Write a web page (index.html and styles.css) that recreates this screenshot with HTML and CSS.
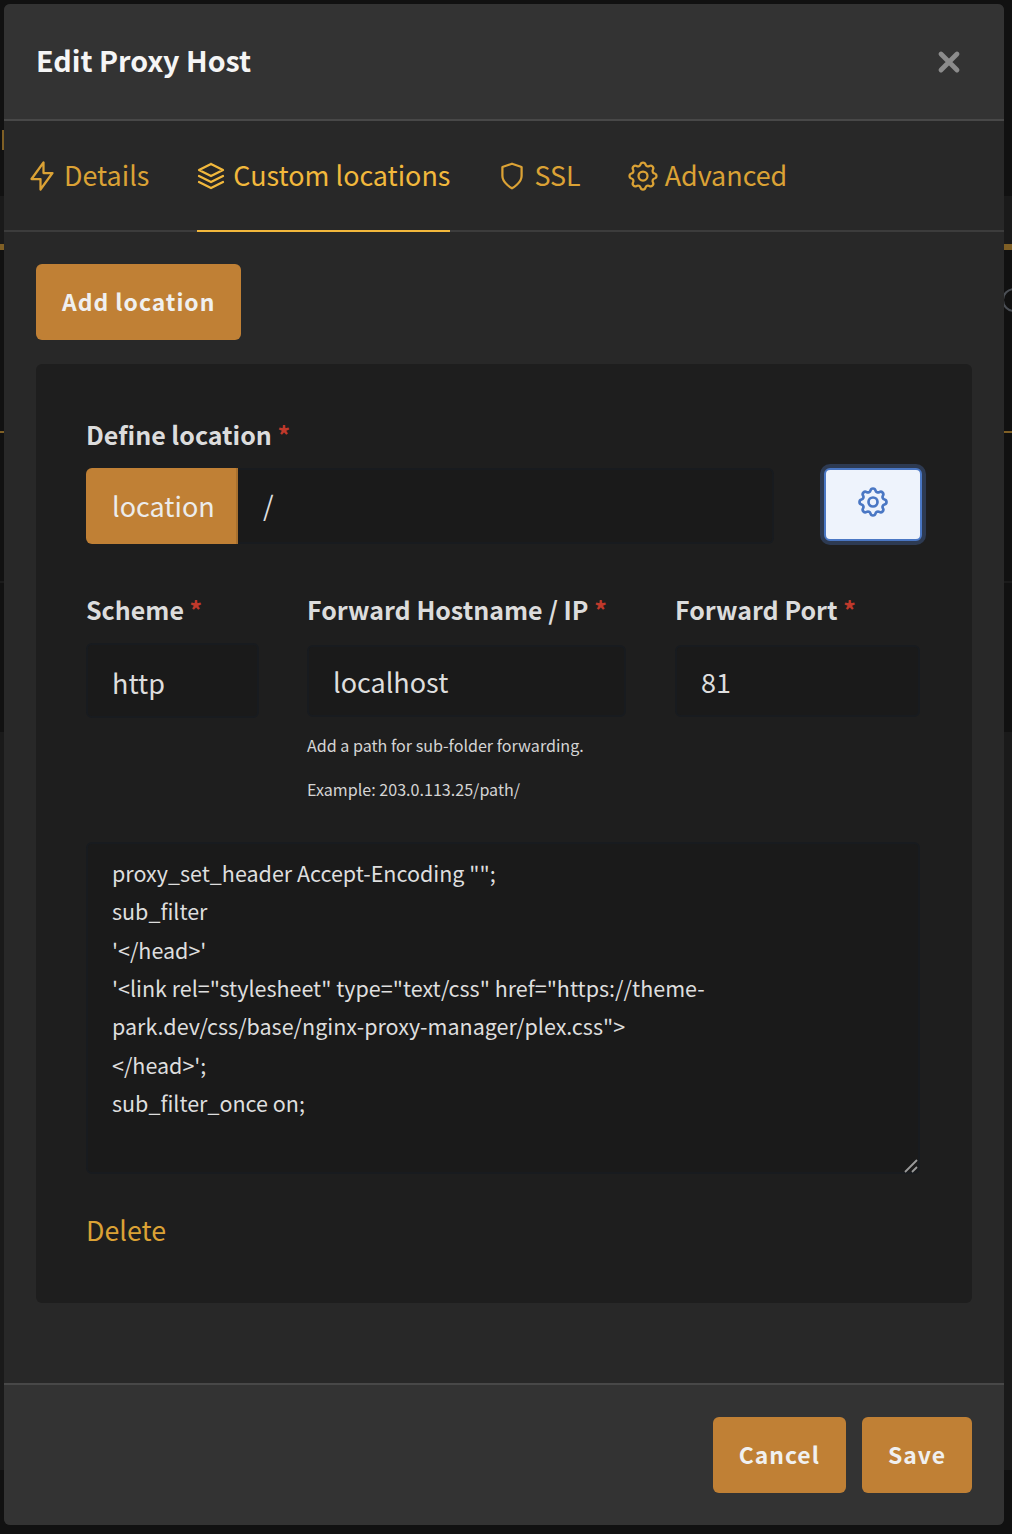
FILE: index.html
```html
<!DOCTYPE html>
<html lang="en">
<head>
<meta charset="utf-8">
<title>Edit Proxy Host</title>
<link rel="stylesheet" href="styles.css">
</head>
<body>
<div class="backdrop-bits">
  <span class="bit band-a"></span>
  <span class="bit band-b"></span>
  <span class="bit band-c"></span>
  <span class="bit bit-a"></span>
  <span class="bit bit-b"></span>
  <span class="bit bit-d"></span>
  <span class="bit bit-f"></span>
</div>
<main class="modal">
  <header class="modal-header">
    <h1 class="modal-title">Edit Proxy Host</h1>
    <svg class="close" viewBox="0 0 24 24" aria-label="Close"><path d="M4 4 20 20M20 4 4 20"/></svg>
  </header>
  <nav class="tabs">
    <a class="tab"><svg class="tab-icon" viewBox="0 0 24 24"><path d="M13 3v7h6l-8 11v-7H5l8-11"/></svg>Details</a>
    <a class="tab tab-active"><svg class="tab-icon" viewBox="0 0 24 24"><path d="M12 4 4 8l8 4 8-4-8-4"/><path d="m4 12 8 4 8-4"/><path d="m4 16 8 4 8-4"/></svg>Custom locations</a>
    <a class="tab"><svg class="tab-icon" viewBox="0 0 24 24"><path d="M12 3.800 18.400 6v6c0 4.600-6.400 8.200-6.400 8.200S5.600 16.600 5.600 12V6L12 3.800Z"/></svg>SSL</a>
    <a class="tab"><svg class="tab-icon" viewBox="0 0 24 24"><path d="M10.325 4.317c.426-1.756 2.924-1.756 3.350 0a1.724 1.724 0 0 0 2.573 1.066c1.543-.940 3.310.826 2.370 2.370a1.724 1.724 0 0 0 1.065 2.572c1.756.426 1.756 2.924 0 3.350a1.724 1.724 0 0 0-1.066 2.573c.940 1.543-.826 3.310-2.370 2.370a1.724 1.724 0 0 0-2.572 1.065c-.426 1.756-2.924 1.756-3.350 0a1.724 1.724 0 0 0-2.573-1.066c-1.543.940-3.310-.826-2.370-2.370a1.724 1.724 0 0 0-1.065-2.572c-1.756-.426-1.756-2.924 0-3.350a1.724 1.724 0 0 0 1.066-2.573c-.940-1.543.826-3.310 2.370-2.370 1 .608 2.296.070 2.572-1.065"/><circle cx="12" cy="12" r="3"/></svg>Advanced</a>
  </nav>
  <section class="modal-body">
    <button class="btn add-btn" type="button">Add location</button>
    <div class="card">
      <label class="label">Define location <span class="req">*</span></label>
      <div class="location-row">
        <div class="input-group">
          <span class="addon">location</span>
          <div class="field path-field">/</div>
        </div>
        <button class="gear-btn" type="button" aria-label="Advanced"><svg class="gear-icon" viewBox="0 0 24 24"><path d="M10.325 4.317c.426-1.756 2.924-1.756 3.350 0a1.724 1.724 0 0 0 2.573 1.066c1.543-.940 3.310.826 2.370 2.370a1.724 1.724 0 0 0 1.065 2.572c1.756.426 1.756 2.924 0 3.350a1.724 1.724 0 0 0-1.066 2.573c.940 1.543-.826 3.310-2.370 2.370a1.724 1.724 0 0 0-2.572 1.065c-.426 1.756-2.924 1.756-3.350 0a1.724 1.724 0 0 0-2.573-1.066c-1.543.940-3.310-.826-2.370-2.370a1.724 1.724 0 0 0-1.065-2.572c-1.756-.426-1.756-2.924 0-3.350a1.724 1.724 0 0 0 1.066-2.573c-.940-1.543.826-3.310 2.370-2.370 1 .608 2.296.070 2.572-1.065"/><circle cx="12" cy="12" r="3"/></svg></button>
      </div>
      <div class="forward-row">
        <div class="col col-scheme">
          <label class="label">Scheme <span class="req">*</span></label>
          <div class="field field-select">http</div>
        </div>
        <div class="col col-host">
          <label class="label">Forward Hostname / IP <span class="req">*</span></label>
          <div class="field field-text">localhost</div>
          <p class="hint hint-first">Add a path for sub-folder forwarding.</p>
          <p class="hint">Example: 203.0.113.25/path/</p>
        </div>
        <div class="col col-port">
          <label class="label">Forward Port <span class="req">*</span></label>
          <div class="field field-text">81</div>
        </div>
      </div>
      <div class="code-box">
        <div>proxy_set_header Accept-Encoding "";</div>
        <div>sub_filter</div>
        <div>'&lt;/head&gt;'</div>
        <div>'&lt;link rel="stylesheet" type="text/css" href="https://theme-</div>
        <div>park.dev/css/base/nginx-proxy-manager/plex.css"&gt;</div>
        <div>&lt;/head&gt;';</div>
        <div>sub_filter_once on;</div>
        <svg class="grip" viewBox="0 0 14 14"><path d="M1 13 13 1M8 13 13 8"/></svg>
      </div>
      <a class="delete">Delete</a>
    </div>
  </section>
  <footer class="modal-footer">
    <button class="btn" type="button">Cancel</button>
    <button class="btn" type="button">Save</button>
  </footer>
</main>
</body>
</html>
```
FILE: styles.css
```css
* { box-sizing: border-box; }
html, body { margin: 0; height: 1534px; overflow: hidden; }
body {
  background: #111111;
  padding: 4px 8px 0 4px;
  position: relative;
  font-family: "Noto Sans CJK SC", "Noto Sans", sans-serif;
  color: #e6e6e6;
}
.bit { position: absolute; left: 0; width: 100%; }
.band-a { top: 196px; height: 48px; background: #1a1a1a; }
.band-b { top: 581px; height: 2px; background: #1b1b1b; }
.band-c { top: 732px; height: 738px; background: #1a1a1a; }
.bit-a { left: 2px; top: 130px; width: 2px; height: 20px; background: #7f5f25; }
.bit-b { top: 244px; height: 6px; background: #7f5f25; }
.bit-d { top: 431px; height: 2px; background: #7f5f25; }
.bit-f { left: 1002px; top: 288px; width: 24px; height: 24px; border: 2px solid #4b4f55; border-radius: 50%; }

.modal {
  position: relative;
  width: 1000px;
  height: 1521px;
  display: flex;
  flex-direction: column;
  background: #282828;
  border-radius: 6px;
  overflow: hidden;
}
.modal-header {
  height: 117px;
  flex: none;
  display: flex;
  align-items: center;
  justify-content: space-between;
  padding: 0 43px 3px 32px;
  background: #333333;
  border-bottom: 2px solid #484848;
}
.modal-title {
  margin: 0;
  font-size: 28.650px;
  line-height: 40px;
  font-weight: 700;
  color: #f5f5f5;
}
.close { width: 24px; height: 24px; margin-top: 4px; fill: none; stroke: #8c8c8c; stroke-width: 4.800; stroke-linecap: round; }

.tabs {
  height: 111px;
  flex: none;
  display: flex;
  gap: 48px;
  padding-left: 24px;
  border-bottom: 2px solid #3c3c3c;
}
.tab {
  height: 111px;
  display: flex;
  align-items: center;
  gap: 8px;
  padding-bottom: 4px;
  font-size: 26.900px;
  line-height: 40px;
  color: #dba235;
}
.tab-active {
  color: #f2b83c;
  padding-bottom: 2px;
  border-bottom: 2px solid #f2b83c;
}
.tab-icon { width: 36px; height: 36px; margin: 3px -4px 0; flex: none; fill: none; stroke: currentColor; stroke-width: 1.500; stroke-linecap: round; stroke-linejoin: round; }

.modal-body { flex: 1; padding: 32px 32px 0; }
.btn {
  height: 76px;
  padding: 0 26px 2px;
  border: 0;
  border-radius: 6px;
  background: #c08035;
  color: #f0f0f0;
  font: 700 22.900px/36px "Noto Sans CJK SC", "Noto Sans", sans-serif;
  letter-spacing: 1px;
}
.add-btn { display: block; }
.card {
  margin-top: 24px;
  height: 939px;
  padding: 50px 50px 0;
  background: #1e1e1e;
  border-radius: 6px;
}
.label {
  display: block;
  height: 40px;
  font-size: 25px;
  line-height: 40px;
  font-weight: 700;
  color: #dcdcdc;
}
.forward-row .label { line-height: 38px; }
.req { color: #c0392b; font-weight: 700; }
.location-row { display: flex; align-items: flex-start; gap: 50px; margin-top: 14px; }
.input-group { flex: none; width: 688px; display: flex; height: 76px; }
.addon {
  width: 152px;
  flex: none;
  display: flex;
  align-items: center;
  padding: 0 0 2px 26px;
  background: #c08035;
  border-right: 2px solid #a8702e;
  border-radius: 6px 0 0 6px;
  font-size: 27px;
  color: #ececec;
}
.field {
  height: 76px;
  padding: 0 24px;
  display: flex;
  align-items: center;
  font-size: 27px;
  background: #1a1a1a;
  border: 2px solid #181b1f;
  border-radius: 6px;
  color: #dedede;
}
.path-field { flex: 1; border-radius: 0 6px 6px 0; border-left: 0; padding-left: 25px; padding-bottom: 4px; }
.gear-btn {
  width: 98px;
  height: 73px;
  flex: none;
  display: flex;
  align-items: center;
  justify-content: center;
  padding: 0 0 5px;
  background: #eef3fc;
  border: 2px solid #4a77c4;
  border-radius: 6px;
  box-shadow: 0 0 0 4px #2d3a52;
}
.gear-icon { width: 36px; height: 36px; fill: none; stroke: #4a77c4; stroke-width: 1.800; stroke-linecap: round; stroke-linejoin: round; }
.forward-row { display: flex; margin-top: 46px; gap: 48px; }
.col-scheme { width: 173px; }
.col-host { width: 320px; }
.col-port { width: 245px; }
.field-select { margin-top: 13px; height: 75px; padding-top: 4px; }
.field-text { margin-top: 15px; height: 72px; }
.col-host .field-text { width: 319px; }
.hint { margin: 0; font-size: 16.100px; line-height: 26px; color: #d4d4d4; }
.hint-first { margin-top: 15px; margin-bottom: 18px; }
.code-box {
  position: relative;
  margin-top: 40px;
  width: 834px;
  height: 332px;
  padding: 10px 24px;
  background: #1a1a1a;
  border: 2px solid #181b1f;
  border-radius: 6px;
  font-size: 21.500px;
  line-height: 38.350px;
  color: #dedede;
}
.grip { position: absolute; right: 0; bottom: -1px; width: 14px; height: 14px; fill: none; stroke: #9a9a9a; stroke-width: 1.800; }
.delete { display: block; margin-top: 36px; font-size: 26.800px; line-height: 40px; color: #dba235; }

.modal-footer {
  height: 142px;
  flex: none;
  display: flex;
  justify-content: flex-end;
  align-items: flex-start;
  gap: 16px;
  padding: 32px 32px 0;
  background: #333333;
  border-top: 2px solid #484848;
}
```
